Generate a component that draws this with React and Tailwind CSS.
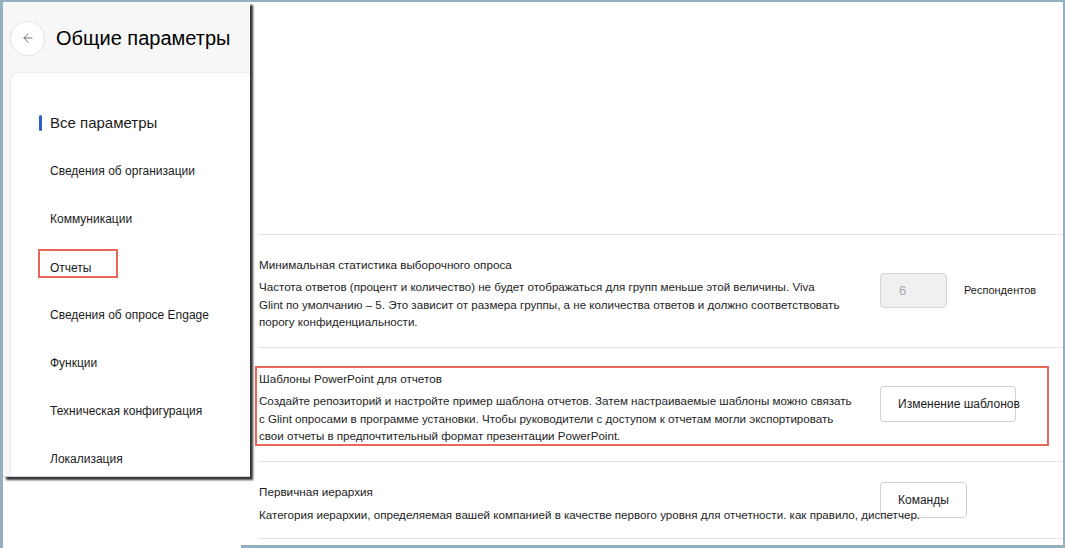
import { ArrowLeft } from "lucide-react"

const navItems = [
  "Сведения об организации",
  "Коммуникации",
  "Отчеты",
  "Сведения об опросе Engage",
  "Функции",
  "Техническая конфигурация",
  "Локализация",
]

function SettingsPanel() {
  return (
    <div className="absolute left-0 top-0 z-20 flex h-[475px] w-[247px] flex-col border-b border-[#cdd6dc] bg-[#f7f7f7] shadow-[3px_3px_2px_rgba(0,0,0,0.8)]">
      {/* header */}
      <div className="flex h-[70px] shrink-0 items-center pl-[7px] pt-[2px]">
        <button className="flex h-[35px] w-[35px] items-center justify-center rounded-full border border-[#e3e3e3] bg-white">
          <ArrowLeft size={14} strokeWidth={1.5} className="text-[#616161]" />
        </button>
        <h1 className="ml-[11px] text-[20px] leading-none text-black">Общие параметры</h1>
      </div>

      {/* nav card */}
      <div className="ml-[7px] min-h-0 flex-1 overflow-hidden rounded-tl-[8px] border-l border-t border-[#ececec] bg-white pt-[26px]">
        <div className="flex h-[48px] items-center pl-[28px]">
          <span className="h-[16px] w-[3px] rounded-full bg-[#2f5fcf]" />
          <span className="ml-[8px] text-[15px] text-[#1b1b1b]">Все параметры</span>
        </div>
        {navItems.map((item) =>
          item === "Отчеты" ? (
            <div key={item} className="flex h-[48px] items-start pl-[27px] pt-[6px]">
              <span className="h-[29px] w-[80px] border-[2.5px] border-[#e8665c] pl-[10px] pt-[10px] text-[12px] leading-[14px] text-[#1b1b1b]">
                {item}
              </span>
            </div>
          ) : (
            <div key={item} className="flex h-[48px] items-center pl-[39px] text-[12px] text-[#1b1b1b]">
              {item}
            </div>
          )
        )}
      </div>
    </div>
  )
}

function ActionButton({ children, width }) {
  return (
    <button
      className="flex h-[36px] shrink-0 items-center whitespace-nowrap rounded-[4px] border border-[#d1d1d1] bg-white pl-[17px] text-[12px] text-[#1b1b1b]"
      style={{ width }}
    >
      {children}
    </button>
  )
}

export default function App() {
  return (
    <div
      className="relative flex h-[548px] w-[1065px] overflow-hidden border-l-[3px] border-r-2 border-t-2 border-[#94afbe] bg-white text-[#1b1b1b]"
      style={{ fontFamily: '"Liberation Sans", Arial, sans-serif' }}
    >
      <SettingsPanel />

      {/* left gap under the panel */}
      <div className="w-[238px] shrink-0" />

      {/* content */}
      <div className="flex flex-1 flex-col border-b-[3px] border-[#94afbe] pl-[17px]">
        <div className="h-[233px] shrink-0 border-b border-[#e1e1e1]" />

        {/* row 1 */}
        <div className="flex h-[113px] shrink-0 border-b border-[#e1e1e1]">
          <div className="w-[622px] shrink-0 pl-px pt-[22px]">
            <div className="text-[11.7px] leading-4">Минимальная статистика выборочного опроса</div>
            <div className="mt-[5px] whitespace-nowrap text-[11.6px] leading-[17.5px] text-[#242424]">
              Частота ответов (процент и количество) не будет отображаться для групп меньше этой величины. Viva
              <br />
              Glint по умолчанию – 5. Это зависит от размера группы, а не количества ответов и должно соответствовать
              <br />
              порогу конфиденциальности.
            </div>
          </div>
          <div className="mt-[38px] flex h-[35px] w-[67px] shrink-0 items-center rounded-[4px] border border-[#d6d6d6] bg-[#f0f0f0] pl-[18px] text-[13px] text-[#a8a8a8]">
            6
          </div>
          <div className="ml-[17px] mt-[47px] text-[11px] leading-4">Респондентов</div>
        </div>

        {/* row 2 */}
        <div className="flex h-[114px] shrink-0 flex-col border-b border-[#e1e1e1] pt-[18px]">
          <div className="-ml-[3px] flex h-[80px] w-[794px] border-2 border-[#e8665c] pl-[2px]">
            <div className="w-[621px] shrink-0 pt-[3px]">
              <div className="text-[11.7px] leading-4">Шаблоны PowerPoint для отчетов</div>
              <div className="mt-[5px] whitespace-nowrap text-[11.6px] leading-[17.5px] text-[#242424]">
                Создайте репозиторий и настройте пример шаблона отчетов. Затем настраиваемые шаблоны можно связать
                <br />
                с Glint опросами в программе установки. Чтобы руководители с доступом к отчетам могли экспортировать
                <br />
                свои отчеты в предпочтительный формат презентации PowerPoint.
              </div>
            </div>
            <div className="mt-[18px]">
              <ActionButton width={136}>Изменение шаблонов</ActionButton>
            </div>
          </div>
        </div>

        {/* row 3 */}
        <div className="flex h-[77px] shrink-0 border-b border-[#e1e1e1]">
          <div className="relative z-10 w-[622px] shrink-0 pl-px pt-[22px]">
            <div className="text-[11.7px] leading-4">Первичная иерархия</div>
            <div className="mt-[6px] whitespace-nowrap text-[11.6px] leading-[17px] text-[#242424]">
              Категория иерархии, определяемая вашей компанией в качестве первого уровня для отчетности. как правило, диспетчер.
            </div>
          </div>
          <div className="mt-[20px]">
            <ActionButton width={87}>Команды</ActionButton>
          </div>
        </div>
      </div>
    </div>
  )
}
